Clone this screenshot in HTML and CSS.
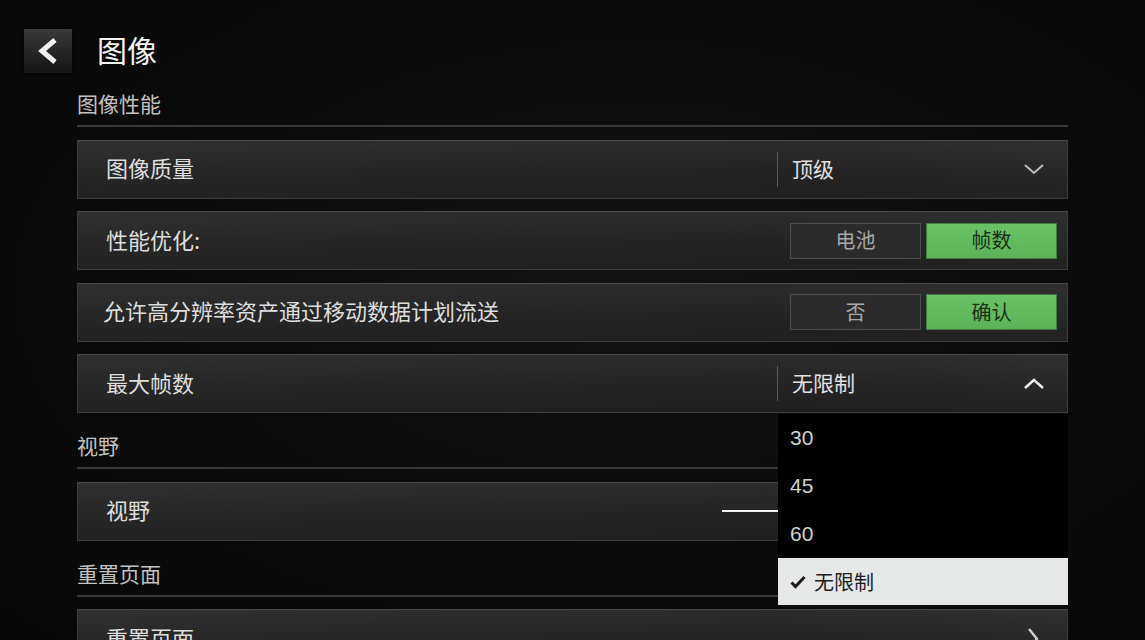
FILE: index.html
```html
<!DOCTYPE html>
<html lang="zh-CN">
<head>
    <meta charset="UTF-8">
    <meta name="viewport" content="width=device-width, initial-scale=1.0">
    <title>图像</title>
    <link rel="stylesheet" href="styles.css">
</head>
<body>
    <div class="topbar">
        <button class="back-btn" aria-label="返回">
            <svg width="24" height="28" viewBox="0 0 24 28">
                <polyline points="19,3 6,14 19,25" fill="none" stroke="#f2f2f2" stroke-width="5" stroke-linejoin="miter"/>
            </svg>
        </button>
        <h1 class="page-title">图像</h1>
    </div>

    <div class="content">
        <div class="section-title">图像性能</div>

        <div class="row">
            <span class="label">图像质量</span>
            <div class="select">
                <span class="select-value">顶级</span>
                <svg class="chevron" width="22" height="14" viewBox="0 0 22 14">
                    <polyline points="2,3 11,11 20,3" fill="none" stroke="#bdbdbd" stroke-width="2"/>
                </svg>
            </div>
        </div>

        <div class="row">
            <span class="label">性能优化:</span>
            <div class="toggle">
                <button class="toggle-btn">电池</button>
                <button class="toggle-btn active">帧数</button>
            </div>
        </div>

        <div class="row">
            <span class="label label-tight">允许高分辨率资产通过移动数据计划流送</span>
            <div class="toggle">
                <button class="toggle-btn">否</button>
                <button class="toggle-btn active">确认</button>
            </div>
        </div>

        <div class="row row-open">
            <span class="label">最大帧数</span>
            <div class="select">
                <span class="select-value">无限制</span>
                <svg class="chevron" width="22" height="14" viewBox="0 0 22 14">
                    <polyline points="2,11 11,3 20,11" fill="none" stroke="#f0f0f0" stroke-width="2.5"/>
                </svg>
            </div>
            <ul class="dropdown">
                <li>30</li>
                <li>45</li>
                <li>60</li>
                <li class="selected">
                    <svg class="check" width="16" height="14" viewBox="0 0 16 14">
                        <polyline points="1.5,7.5 5.5,11.5 14.5,2" fill="none" stroke="#1a1a1a" stroke-width="3"/>
                    </svg>
                    无限制
                </li>
            </ul>
        </div>

        <div class="section-title">视野</div>

        <div class="row">
            <span class="label">视野</span>
            <div class="slider"></div>
        </div>

        <div class="section-title">重置页面</div>

        <div class="row">
            <span class="label">重置页面</span>
            <svg class="chevron-right" width="14" height="24" viewBox="0 0 14 24">
                <polyline points="3,2 11,12 3,22" fill="none" stroke="#d0d0d0" stroke-width="2.5"/>
            </svg>
        </div>
    </div>
</body>
</html>
```

FILE: styles.css
```css
html, body {
    margin: 0;
    height: 100%;
    overflow: hidden;
}
body {
    font-family: "Noto Sans CJK SC", "Noto Sans", sans-serif;
    background: radial-gradient(ellipse at 55% 45%, #131313 0%, #0b0b0b 55%, #080808 100%);
    color: #dcdcdc;
}
.topbar {
    display: flex;
    align-items: center;
    gap: 25px;
    margin-top: 29px;
    padding-left: 24px;
    height: 44px;
}
.back-btn {
    width: 48px;
    height: 44px;
    border: none;
    padding: 0;
    background: linear-gradient(#3a3a3a, #232323 60%, #161616);
    box-shadow: 0 2px 4px rgba(0, 0, 0, 0.6);
    display: flex;
    align-items: center;
    justify-content: center;
}
.page-title {
    margin: 0;
    font-size: 30px;
    font-weight: normal;
    color: #f4f4f4;
    line-height: 44px;
    padding-bottom: 4px;
}
.content {
    position: relative;
    margin-left: 77px;
    width: 991px;
}
.section-title {
    margin-top: 18px;
    font-size: 21px;
    line-height: 28px;
    color: #c2c2c2;
    padding-bottom: 8px;
    border-bottom: 2px solid #3a3a3a;
    margin-bottom: 12.5px;
}
.content > .section-title:first-child {
    margin-top: 16px;
}
.row {
    position: relative;
    display: flex;
    align-items: center;
    height: 57px;
    margin-bottom: 12.5px;
    border: 1px solid #3d3d3d;
    border-top-color: #4a4a4a;
    background: linear-gradient(90deg, rgba(255,255,255,0.02), rgba(60,30,30,0.06) 70%, rgba(255,255,255,0.02)),
                linear-gradient(#2c2c2c, #242424 50%, #1e1e1e);
}
.row:last-child {
    margin-bottom: 0;
}
.label {
    flex: 1;
    padding-left: 28px;
    padding-bottom: 4px;
    font-size: 22px;
    color: #dedede;
}
.label-tight {
    padding-left: 25px;
}
.select {
    position: relative;
    width: 290px;
    height: 100%;
    display: flex;
    align-items: center;
}
.select::before {
    content: "";
    position: absolute;
    left: 0;
    top: 11px;
    bottom: 11px;
    width: 1px;
    background: #5a5a5a;
}
.select-value {
    flex: 1;
    padding-left: 15px;
    padding-bottom: 3px;
    font-size: 21px;
    color: #e2e2e2;
}
.chevron {
    margin-right: 22px;
}
.toggle {
    display: flex;
    gap: 5px;
    margin-right: 10px;
}
.toggle-btn {
    width: 131px;
    height: 36px;
    border: 1px solid #4e4e4e;
    background: #2b2b2b;
    color: #a8a8a8;
    font-family: inherit;
    font-size: 20px;
    padding: 0 0 2px;
}
.toggle-btn.active {
    background: linear-gradient(#6ac266, #5bb257);
    border-color: #3f7c3d;
    color: #1b301b;
}
.dropdown {
    position: absolute;
    z-index: 2;
    left: 700px;
    top: 59px;
    width: 290px;
    margin: 0;
    padding: 0;
    list-style: none;
    background: #000;
}
.dropdown li {
    height: 48px;
    display: flex;
    align-items: center;
    padding-left: 12px;
    font-family: "Liberation Sans", "Noto Sans CJK SC", sans-serif;
    font-size: 21px;
    color: #d0d0d0;
}
.dropdown li.selected {
    height: 47px;
    background: #e6e7e7;
    color: #1c1c1c;
    font-family: "Noto Sans CJK SC", sans-serif;
    font-size: 20px;
}
.check {
    margin-right: 8px;
}
.slider {
    width: 320px;
    height: 2px;
    margin-right: 25px;
    background: #f2f2f2;
}
.chevron-right {
    margin-right: 27px;
}
```
